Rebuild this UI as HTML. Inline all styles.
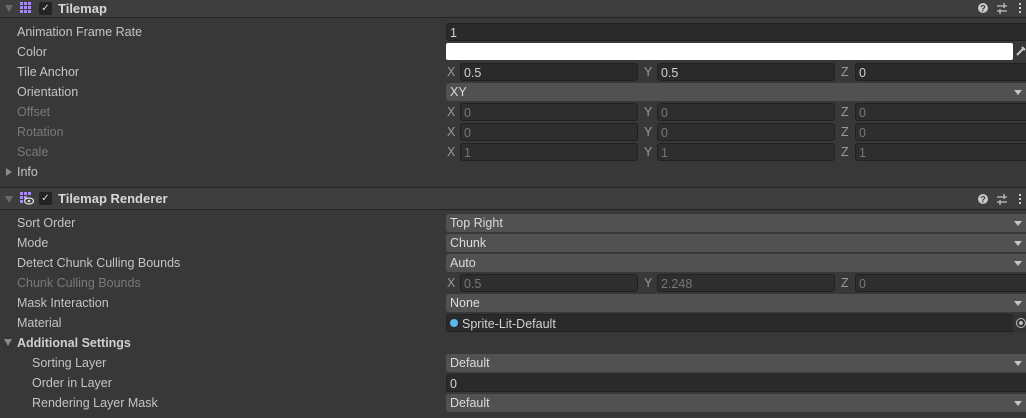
<!DOCTYPE html>
<html><head><style>
*{margin:0;padding:0;box-sizing:border-box}
body{width:1026px;height:418px;background:#383838;font-family:"Liberation Sans",sans-serif;font-size:12.5px;color:#c4c4c4;position:relative;overflow:hidden}
.a{position:absolute}
.hdr{position:absolute;left:0;width:1026px;height:20px;background:#3e3e3e;border-bottom:1px solid #232323}
.lbl{position:absolute;left:17px;height:20px;line-height:20px}
.dim{color:#7a7a7a}
.f{position:absolute;height:18px;line-height:18px;background:#2a2a2a;border:1px solid #212121;border-radius:3px;padding-left:3px;color:#d2d2d2}
.fd{color:#777;background:#2e2e2e}
.dd{position:absolute;left:446px;width:584px;height:18px;line-height:18px;background:#515151;border-radius:3px;padding-left:4px;color:#dcdcdc}
.dd:after{content:"";position:absolute;right:8px;top:7px;border-left:4px solid transparent;border-right:4px solid transparent;border-top:5px solid #c4c4c4}
.xl{position:absolute;height:20px;line-height:20px;color:#9a9a9a}
.title{position:absolute;left:58px;font-weight:bold;font-size:13px;color:#d8d8d8;line-height:18px}
.cb{position:absolute;left:39px;width:13px;height:13px;background:#232323;border-radius:2px;color:#ddd;font-size:10px;line-height:13px;text-align:center}
.tri{position:absolute;left:5px;border-left:4px solid transparent;border-right:4px solid transparent;border-top:7px solid #6a6a6a}
</style></head><body>
<div class="hdr" style="top:-2px"></div>
<div class="tri" style="top:5px"></div>
<svg class="a" style="left:20px;top:1px" width="13" height="13"><g fill="#a98cf0"><rect x="0" y="1" width="3" height="3"/><rect x="4" y="1" width="3" height="3"/><rect x="8" y="1" width="3" height="3"/><rect x="0" y="5" width="3" height="3"/><rect x="4" y="5" width="3" height="3"/><rect x="8" y="5" width="3" height="3"/><rect x="0" y="9" width="3" height="3"/><rect x="4" y="9" width="3" height="3"/><rect x="8" y="9" width="3" height="3"/></g></svg>
<div class="cb" style="top:2px">✓</div>
<div class="title" style="top:0">Tilemap</div>
<svg class="a" style="left:977px;top:2px" width="49" height="13"><circle cx="6" cy="6" r="5" fill="#c8c8c8"/><text x="6" y="9.5" font-size="9" font-weight="bold" text-anchor="middle" fill="#3e3e3e" font-family="Liberation Sans">?</text><g stroke="#c8c8c8" stroke-width="1.2"><line x1="20" y1="4" x2="30" y2="4"/><line x1="20" y1="9" x2="30" y2="9"/><line x1="27" y1="1" x2="27" y2="6"/><line x1="23" y1="7" x2="23" y2="12"/></g><g fill="#c8c8c8"><rect x="42" y="1" width="2" height="2"/><rect x="42" y="5" width="2" height="2"/><rect x="42" y="9" width="2" height="2"/></g></svg>

<div class="lbl" style="top:22px">Animation Frame Rate</div>
<div class="f" style="top:23px;left:446px;width:584px">1</div>
<div class="lbl" style="top:42px">Color</div>
<div class="a" style="top:43px;left:446px;width:567px;height:17px;background:#fff;border-radius:2px"></div>
<svg class="a" style="left:1015px;top:45px" width="11" height="12"><path d="M2 10 L8 4 M7 2 L10 5" stroke="#c8c8c8" stroke-width="2"/></svg>
<div class="lbl" style="top:62px">Tile Anchor</div>
<div class="xl" style="top:62px;left:447px">X</div><div class="f" style="top:63px;left:460px;width:178px">0.5</div>
<div class="xl" style="top:62px;left:644px">Y</div><div class="f" style="top:63px;left:657px;width:178px">0.5</div>
<div class="xl" style="top:62px;left:841px">Z</div><div class="f" style="top:63px;left:855px;width:180px">0</div>
<div class="lbl" style="top:82px">Orientation</div>
<div class="dd" style="top:83px">XY</div>
<div class="lbl dim" style="top:102px">Offset</div>
<div class="xl dim" style="top:102px;left:447px">X</div><div class="f fd" style="top:103px;left:460px;width:178px">0</div>
<div class="xl dim" style="top:102px;left:644px">Y</div><div class="f fd" style="top:103px;left:657px;width:178px">0</div>
<div class="xl dim" style="top:102px;left:841px">Z</div><div class="f fd" style="top:103px;left:855px;width:180px">0</div>
<div class="lbl dim" style="top:122px">Rotation</div>
<div class="xl dim" style="top:122px;left:447px">X</div><div class="f fd" style="top:123px;left:460px;width:178px">0</div>
<div class="xl dim" style="top:122px;left:644px">Y</div><div class="f fd" style="top:123px;left:657px;width:178px">0</div>
<div class="xl dim" style="top:122px;left:841px">Z</div><div class="f fd" style="top:123px;left:855px;width:180px">0</div>
<div class="lbl dim" style="top:142px">Scale</div>
<div class="xl dim" style="top:142px;left:447px">X</div><div class="f fd" style="top:143px;left:460px;width:178px">1</div>
<div class="xl dim" style="top:142px;left:644px">Y</div><div class="f fd" style="top:143px;left:657px;width:178px">1</div>
<div class="xl dim" style="top:142px;left:841px">Z</div><div class="f fd" style="top:143px;left:855px;width:180px">1</div>
<div class="a" style="top:168px;left:6px;border-top:4px solid transparent;border-bottom:4px solid transparent;border-left:6px solid #8a8a8a"></div>
<div class="lbl" style="top:162px">Info</div>

<div class="a" style="top:187px;left:0;width:1026px;height:1px;background:#232323"></div>
<div class="hdr" style="top:188px;height:22px"></div>
<div class="tri" style="top:196px"></div>
<svg class="a" style="left:20px;top:191px" width="14" height="14"><g fill="#a98cf0"><rect x="0" y="1" width="3" height="3"/><rect x="4" y="1" width="3" height="3"/><rect x="8" y="1" width="3" height="3"/><rect x="0" y="5" width="3" height="3"/><rect x="4" y="5" width="3" height="3"/><rect x="0" y="9" width="3" height="3"/></g><ellipse cx="9" cy="10" rx="4.5" ry="3" fill="none" stroke="#ddd" stroke-width="1.3"/><circle cx="9" cy="10" r="1.3" fill="#ddd"/></svg>
<div class="cb" style="top:192px">✓</div>
<div class="title" style="top:190px">Tilemap Renderer</div>
<svg class="a" style="left:977px;top:193px" width="49" height="13"><circle cx="6" cy="6" r="5" fill="#c8c8c8"/><text x="6" y="9.5" font-size="9" font-weight="bold" text-anchor="middle" fill="#3e3e3e" font-family="Liberation Sans">?</text><g stroke="#c8c8c8" stroke-width="1.2"><line x1="20" y1="4" x2="30" y2="4"/><line x1="20" y1="9" x2="30" y2="9"/><line x1="27" y1="1" x2="27" y2="6"/><line x1="23" y1="7" x2="23" y2="12"/></g><g fill="#c8c8c8"><rect x="42" y="1" width="2" height="2"/><rect x="42" y="5" width="2" height="2"/><rect x="42" y="9" width="2" height="2"/></g></svg>

<div class="lbl" style="top:213px">Sort Order</div><div class="dd" style="top:214px">Top Right</div>
<div class="lbl" style="top:233px">Mode</div><div class="dd" style="top:234px">Chunk</div>
<div class="lbl" style="top:253px">Detect Chunk Culling Bounds</div><div class="dd" style="top:254px">Auto</div>
<div class="lbl dim" style="top:273px">Chunk Culling Bounds</div>
<div class="xl dim" style="top:273px;left:447px">X</div><div class="f fd" style="top:274px;left:460px;width:178px">0.5</div>
<div class="xl dim" style="top:273px;left:644px">Y</div><div class="f fd" style="top:274px;left:657px;width:178px">2.248</div>
<div class="xl dim" style="top:273px;left:841px">Z</div><div class="f fd" style="top:274px;left:855px;width:180px">0</div>
<div class="lbl" style="top:293px">Mask Interaction</div><div class="dd" style="top:294px">None</div>
<div class="lbl" style="top:313px">Material</div>
<div class="f" style="top:314px;left:446px;width:584px;padding-left:15px">Sprite-Lit-Default</div>
<div class="a" style="top:319px;left:450px;width:8px;height:8px;border-radius:50%;background:#5ab8f0"></div>
<div class="a" style="top:314px;left:1013px;width:13px;height:18px;background:#333"></div>
<div class="a" style="top:318px;left:1016px;width:10px;height:10px;border-radius:50%;border:1px solid #bbb"></div>
<div class="a" style="top:321px;left:1019px;width:4px;height:4px;border-radius:50%;background:#bbb"></div>
<div class="lbl" style="top:333px;left:17px;font-weight:bold;color:#d0d0d0">Additional Settings</div>
<div class="a" style="top:339px;left:4px;border-left:4px solid transparent;border-right:4px solid transparent;border-top:7px solid #8a8a8a"></div>
<div class="lbl" style="top:353px;left:32px">Sorting Layer</div><div class="dd" style="top:354px">Default</div>
<div class="lbl" style="top:373px;left:32px">Order in Layer</div><div class="f" style="top:374px;left:446px;width:584px">0</div>
<div class="lbl" style="top:393px;left:32px">Rendering Layer Mask</div><div class="dd" style="top:394px">Default</div>
</body></html>
